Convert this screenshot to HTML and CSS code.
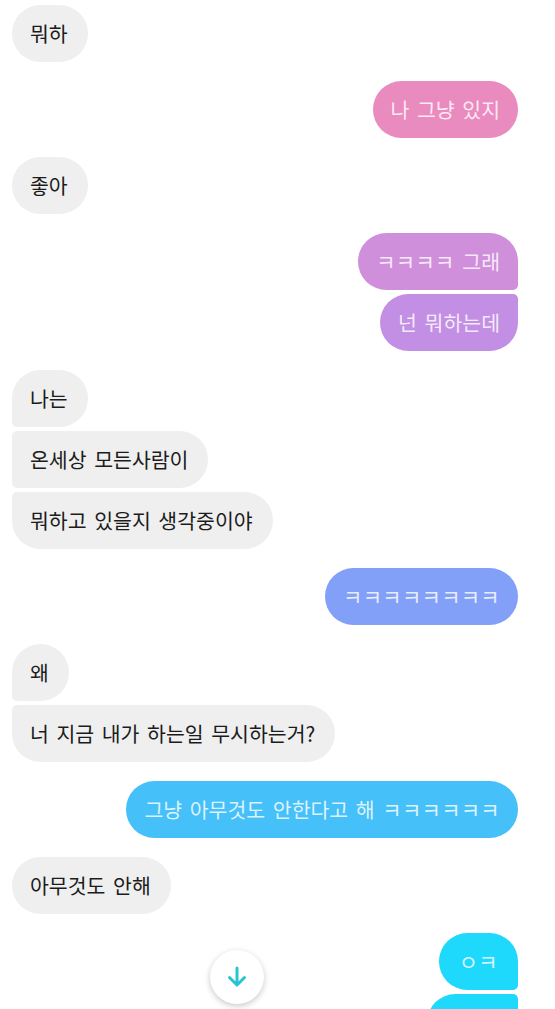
FILE: index.html
```html
<!DOCTYPE html>
<html>
<head>
	<meta charset="utf-8">
	<title>채팅</title>
	<link rel="stylesheet" href="styles.css">
</head>
<body>
	<div class="chat">
		<div class="group in">
			<div class="bubble">뭐하</div>
		</div>
		<div class="group out">
			<div class="bubble pink">나 그냥 있지</div>
		</div>
		<div class="group in">
			<div class="bubble">좋아</div>
		</div>
		<div class="group out">
			<div class="bubble violet"><span class="kk">ㅋㅋㅋㅋ</span> 그래</div>
			<div class="bubble lilac">넌 뭐하는데</div>
		</div>
		<div class="group in">
			<div class="bubble">나는</div>
			<div class="bubble">온세상 모든사람이</div>
			<div class="bubble">뭐하고 있을지 생각중이야</div>
		</div>
		<div class="group out">
			<div class="bubble periwinkle"><span class="kk">ㅋㅋㅋㅋㅋㅋㅋㅋ</span></div>
		</div>
		<div class="group in">
			<div class="bubble">왜</div>
			<div class="bubble">너 지금 내가 하는일 무시하는거?</div>
		</div>
		<div class="group out">
			<div class="bubble sky">그냥 아무것도 안한다고 해 <span class="kk">ㅋㅋㅋㅋㅋㅋ</span></div>
		</div>
		<div class="group in">
			<div class="bubble">아무것도 안해</div>
		</div>
		<div class="group out">
			<div class="bubble cyan"><span class="kk">ㅇㅋ</span></div>
			<div class="bubble cyan stub"></div>
		</div>
	</div>

	<button class="scroll-down" type="button">
		<svg width="24" height="24" viewBox="0 0 24 24"><path d="M12 3v17M4.5 12.5 12 20l7.5-7.5" fill="none" stroke="#27c5d3" stroke-width="3" stroke-linecap="round" stroke-linejoin="round"/></svg>
	</button>
</body>
</html>
```

FILE: styles.css
```css
body {
	margin: 0;
	height: 1009px;
	overflow: hidden;
	background-color: #fff;
	font-family: "Noto Sans CJK KR", "Noto Sans", sans-serif;
	position: relative;
}
.chat {
	display: flex;
	flex-direction: column;
	gap: 19px;
	padding: 5px 37px 0 12px;
}
.group {
	display: flex;
	flex-direction: column;
	gap: 4px;
}
.in {
	align-items: flex-start;
}
.out {
	align-items: flex-end;
}
.bubble {
	height: 57px;
	line-height: 57px;
	padding: 0 18px;
	border-radius: 28.5px;
	font-size: 20.5px;
	word-spacing: 3px;
	white-space: nowrap;
	box-sizing: border-box;
}
.in .bubble {
	background-color: #efefef;
	color: #1c1c1c;
	padding-right: 20px;
}
.out .bubble {
	color: rgba(255, 255, 255, 0.82);
}
.in .bubble:not(:last-child) {
	border-bottom-left-radius: 5px;
}
.in .bubble:not(:first-child) {
	border-top-left-radius: 5px;
}
.out .bubble:not(:last-child) {
	border-bottom-right-radius: 5px;
}
.out .bubble:not(:first-child) {
	border-top-right-radius: 5px;
}
.kk {
	font-size: 21px;
	letter-spacing: 0.3px;
	word-spacing: 0;
}
.pink {
	background-color: #ea8bbf;
}
.violet {
	background-color: #cf8fdb;
}
.lilac {
	background-color: #c28fe4;
}
.periwinkle {
	background-color: #82a0f8;
}
.sky {
	background-color: #45c0f9;
}
.cyan {
	background-color: #1ed9fb;
	padding: 0 20px;
}
.stub {
	width: 91px;
}
.scroll-down {
	position: absolute;
	left: 210px;
	top: 950px;
	width: 54px;
	height: 54px;
	border: none;
	border-radius: 50%;
	background-color: #fff;
	box-shadow: 0 2px 6px rgba(0, 0, 0, 0.22);
	display: flex;
	align-items: center;
	justify-content: center;
	padding: 0;
}
```
